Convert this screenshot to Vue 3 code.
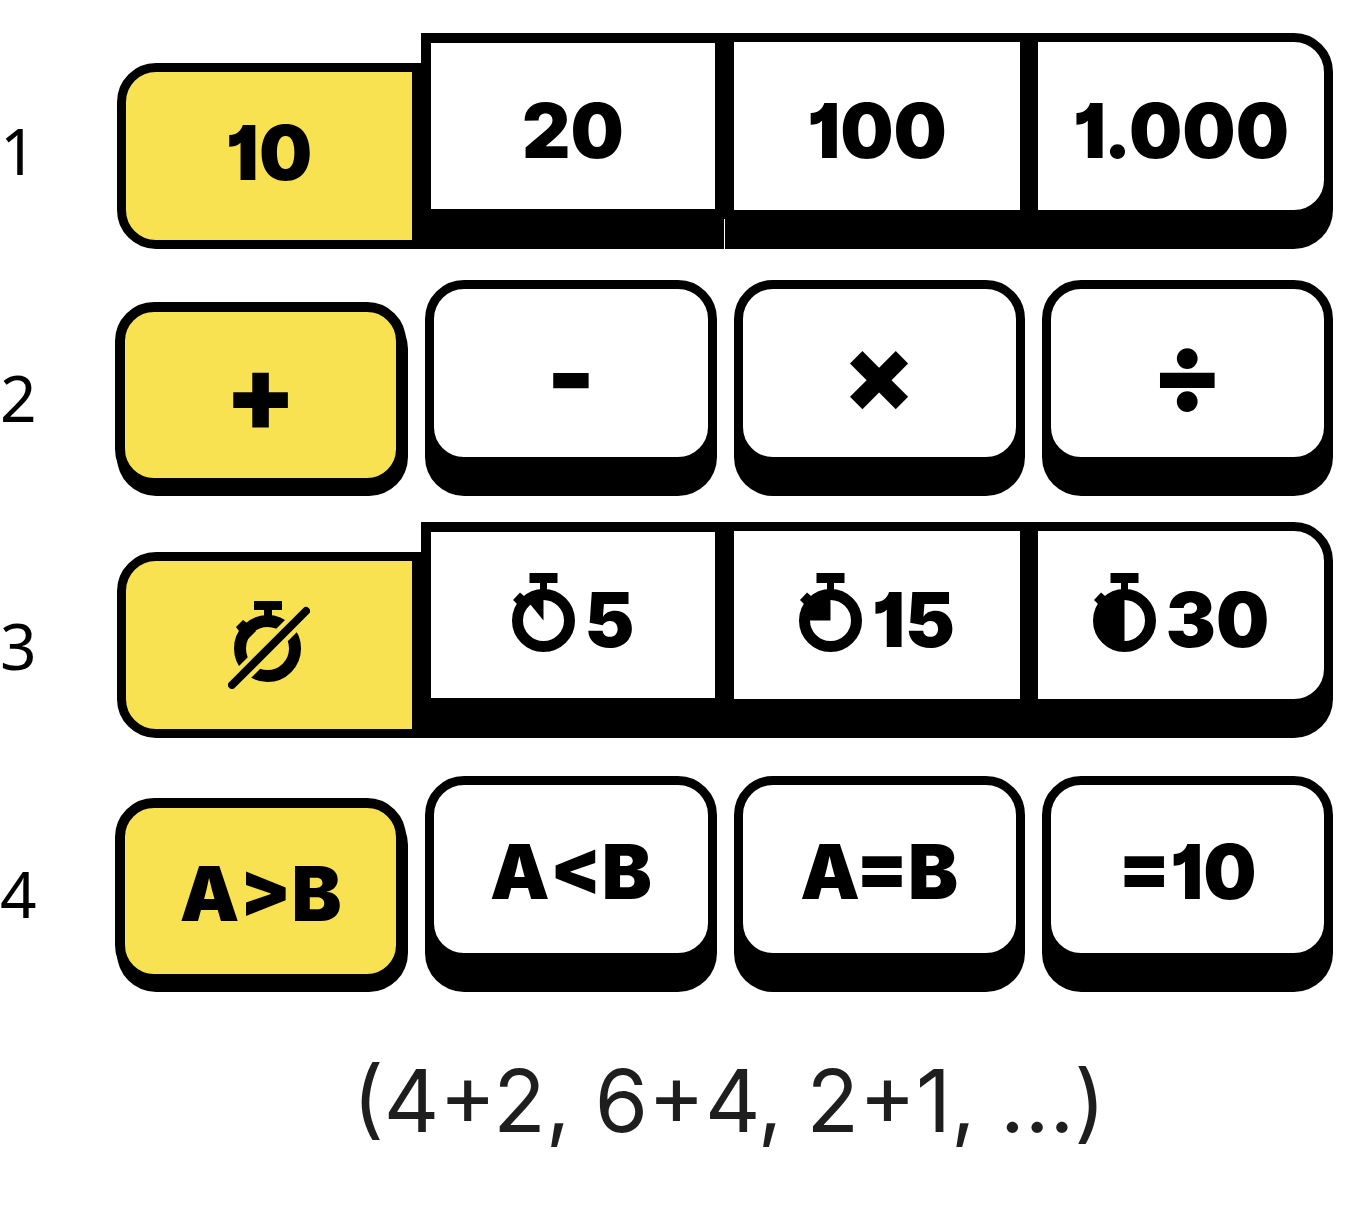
<script setup>
import { ref } from 'vue'

const rows = ref([
  {
    id: 1,
    name: 'range',
    joined: true,
    selected: 0,
    keys: [{ text: '10' }, { text: '20' }, { text: '100' }, { text: '1.000' }],
  },
  {
    id: 2,
    name: 'operators',
    selected: 0,
    keys: [{ text: '+' }, { text: '-' }, { text: '×' }, { text: '÷' }],
  },
  {
    id: 3,
    name: 'timer',
    joined: true,
    selected: 0,
    keys: [
      { text: '', off: true },
      { text: '5', wedge: 'M31.5 47.5V24L22 24L18 31Z' },
      { text: '15', wedge: 'M31.5 47.5V24H20L8 36V47.5Z' },
      { text: '30', wedge: 'M31.5 24V71A23.5 23.5 0 0 1 31.5 24Z' },
    ],
  },
  {
    id: 4,
    name: 'comparison',
    selected: 0,
    keys: [{ text: 'A>B' }, { text: 'A<B' }, { text: 'A=B' }, { text: '=10' }],
  },
])
</script>

<template>
  <main class="page">
    <section
      v-for="row in rows"
      :key="row.id"
      class="row"
      :class="[row.name, { joined: row.joined }]"
    >
      <span :id="'row-' + row.id" class="number">{{ row.id }}</span>
      <div class="keys" role="group" :aria-labelledby="'row-' + row.id">
        <button
          v-for="(key, i) in row.keys"
          :key="i"
          type="button"
          class="key"
          :class="{ pressed: row.selected === i }"
          :aria-pressed="row.selected === i"
          :aria-label="key.off ? 'No timer' : undefined"
          @click="row.selected = i"
        >
          <svg v-if="key.off" class="watch-off" width="82" height="88" viewBox="0 0 82 88" aria-hidden="true">
            <path d="M26 0H54V9H44V18H36V9H26Z" />
            <path d="M8 26L15 19L19 22L28 30L19 39L11 30Z" />
            <circle cx="39.5" cy="47.5" r="27.5" class="ring-off" />
            <path d="M8 80L74 14" class="gap" />
            <path d="M4 84L78 10" class="slash" />
          </svg>
          <svg v-else-if="key.wedge" class="watch" width="63" height="79" viewBox="0 0 63 79" aria-hidden="true">
            <path d="M17.5 0H45.5V10H35V19H28V10H17.5Z" />
            <path d="M1 27L8 19.5L12 23L16 27L9 35L5 31Z" />
            <circle cx="31.5" cy="47.5" r="26" class="ring" />
            <path :d="key.wedge" />
          </svg>
          <span v-if="key.text" class="text">{{ key.text }}</span>
        </button>
      </div>
    </section>
    <p class="caption">(4+2, 6+4, 2+1, ...)</p>
  </main>
</template>

<style>
body {
  margin: 0;
  background: #fff;
}
</style>

<style scoped>
.page {
  padding: 33px 35px 64px 0;
  color: #000;
}

.row {
  display: grid;
  grid-template-columns: 117px minmax(0, 1fr);
  align-items: center;
  margin-bottom: 31px;
}

.row.operators {
  margin-bottom: 26px;
}

.row.timer {
  margin-bottom: 38px;
}

.number {
  padding-top: 20px;
  font: 400 64px/1 'Noto Sans', sans-serif;
}

.timer .number {
  padding-top: 32px;
}

.keys {
  display: grid;
  grid-template-columns: repeat(4, minmax(0, 1fr));
  gap: 17px;
  padding-bottom: 30px;
}

.joined .keys {
  gap: 0;
}

.key {
  display: flex;
  align-items: center;
  justify-content: center;
  gap: 10px;
  box-sizing: border-box;
  height: 186px;
  margin: 0;
  padding: 8px 0 0;
  border: 9px solid #000;
  border-radius: 39px;
  background: #fff;
  box-shadow: 0 30px 0 #000;
  color: #000;
  font: 900 75px/1 Inter, sans-serif;
  font-feature-settings: 'cv01';
  cursor: pointer;
}

.key.pressed {
  border-width: 10px;
  background: #f9e252;
  box-shadow: 2px 8px 0 #000;
  transform: translate(-2px, 22px);
}

.operators .key {
  padding: 0;
  font-size: 104px;
}

.operators .key.pressed {
  padding-bottom: 4px;
}

.comparison .key {
  padding: 4px 0 0;
}

.joined .key {
  border-radius: 0;
}

.joined .key:nth-child(2) {
  border-width: 10px;
  box-shadow: -1px 30px 0 #000;
}

.timer .key:nth-child(2) {
  box-shadow: 0 30px 0 #000;
}

.joined .key:first-child {
  border-radius: 39px 0 0 39px;
}

.joined .key:last-child {
  border-radius: 0 39px 39px 0;
}

.joined .key.pressed {
  padding: 0 0 8px;
  border-width: 9px;
  box-shadow: none;
  transform: translateY(30px);
}

.timer .key.pressed {
  padding: 0;
}

.watch,
.watch-off {
  flex: none;
  fill: #000;
}

.watch {
  margin-bottom: 14px;
}

.ring,
.ring-off,
.gap,
.slash {
  fill: none;
  stroke: #000;
}

.ring {
  stroke-width: 11px;
}

.ring-off {
  stroke-width: 12px;
}

.gap {
  stroke: #f9e252;
  stroke-width: 17px;
}

.slash {
  stroke-width: 8px;
  stroke-linecap: round;
}

.caption {
  margin: 66px 0 0 125px;
  color: #1e1e1e;
  font: 400 86px/1 Inter, sans-serif;
  text-align: center;
}
</style>
